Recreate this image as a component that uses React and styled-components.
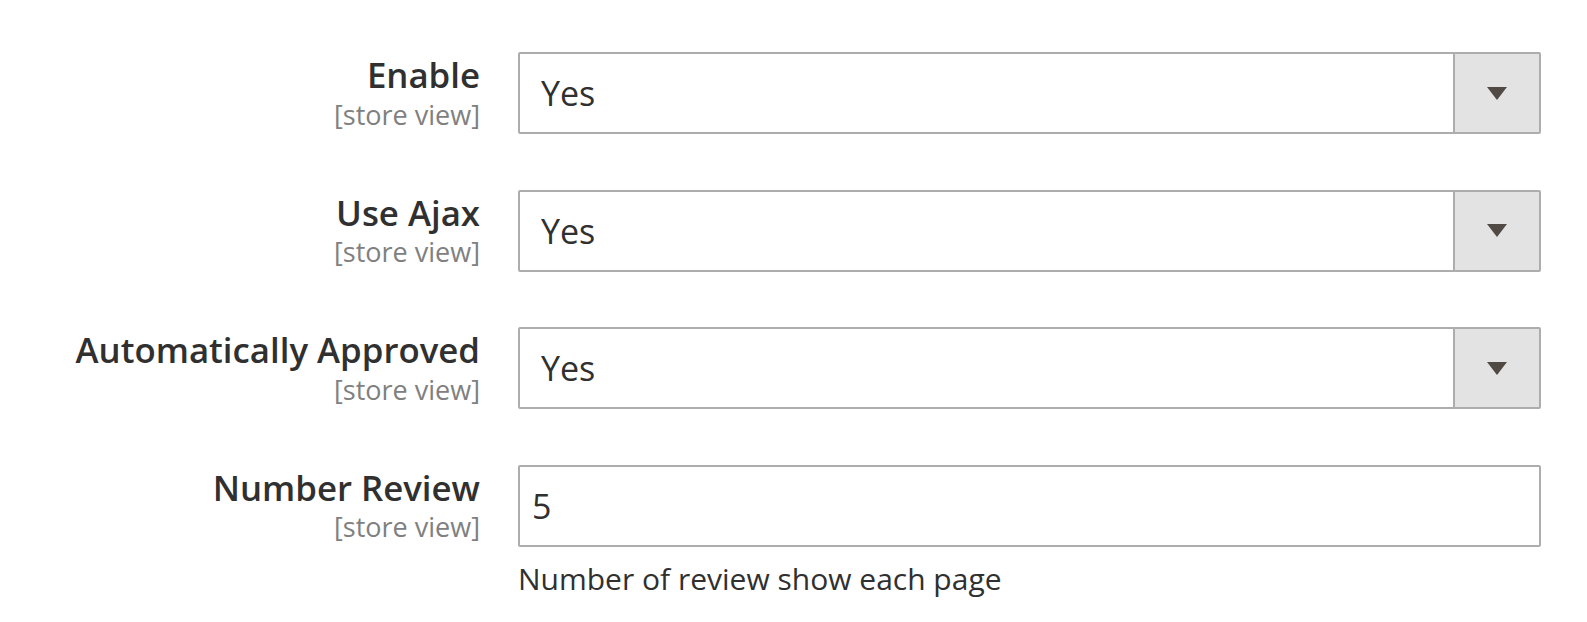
import styled, { createGlobalStyle } from 'styled-components';

const GlobalStyle = createGlobalStyle`
  body {
    margin: 0;
    background: #fff;
    font-family: 'Open Sans', 'Liberation Sans', sans-serif;
    color: #303030;
  }
`;

const fields = [
  { label: 'Enable', type: 'select', value: 'Yes' },
  { label: 'Use Ajax', type: 'select', value: 'Yes' },
  { label: 'Automatically Approved', type: 'select', value: 'Yes' },
  { label: 'Number Review', type: 'text', value: '5', note: 'Number of review show each page' },
];

export default function App() {
  return (
    <>
      <GlobalStyle />
      <Fieldset>
        {fields.map((field) => (
          <Row key={field.label}>
            <Label>
              <LabelText>{field.label}</LabelText>
              <Scope>[store view]</Scope>
            </Label>
            <Control>
              {field.type === 'select' ? (
                <Select>
                  <SelectValue>{field.value}</SelectValue>
                  <Toggle>
                    <Arrow />
                  </Toggle>
                </Select>
              ) : (
                <Input defaultValue={field.value} />
              )}
              {field.note && <Note>{field.note}</Note>}
            </Control>
          </Row>
        ))}
      </Fieldset>
    </>
  );
}

const Fieldset = styled.div`
  display: flex;
  flex-direction: column;
  gap: 55.5px;
  padding: 52px 46px 0 0;
`;

const Row = styled.div`
  display: grid;
  grid-template-columns: 480px 1023px;
  column-gap: 38px;
  align-items: start;
`;

const Label = styled.div`
  display: flex;
  flex-direction: column;
  align-items: flex-end;
  text-align: right;
  padding-top: 2px;
`;

const LabelText = styled.span`
  font-size: 34.8px;
  font-weight: 600;
  line-height: 1.2;
  color: #303030;
`;

const Scope = styled.span`
  margin-top: 3px;
  font-size: 27px;
  line-height: 1.2;
  color: #808080;
`;

const Control = styled.div`
  display: flex;
  flex-direction: column;
`;

const Select = styled.div`
  display: flex;
  height: 82px;
  box-sizing: border-box;
  border: 2px solid #adadad;
  border-radius: 2px;
  background: #fff;
`;

const SelectValue = styled.div`
  flex: 1;
  display: flex;
  align-items: center;
  padding-left: 21px;
  font-size: 34px;
  color: #303030;
`;

const Toggle = styled.div`
  width: 84px;
  display: flex;
  align-items: center;
  justify-content: center;
  background: #e3e3e3;
  border-left: 2px solid #adadad;
`;

const Arrow = styled.span`
  width: 0;
  height: 0;
  border-left: 10px solid transparent;
  border-right: 10px solid transparent;
  border-top: 13px solid #514943;
`;

const Input = styled.input`
  height: 82px;
  box-sizing: border-box;
  border: 2px solid #adadad;
  border-radius: 2px;
  padding: 0 12px;
  font-family: 'Open Sans', 'Liberation Sans', sans-serif;
  font-size: 34px;
  color: #303030;
  outline: none;
`;

const Note = styled.div`
  margin-top: 14px;
  font-size: 30px;
  line-height: 1.2;
  color: #303030;
`;
